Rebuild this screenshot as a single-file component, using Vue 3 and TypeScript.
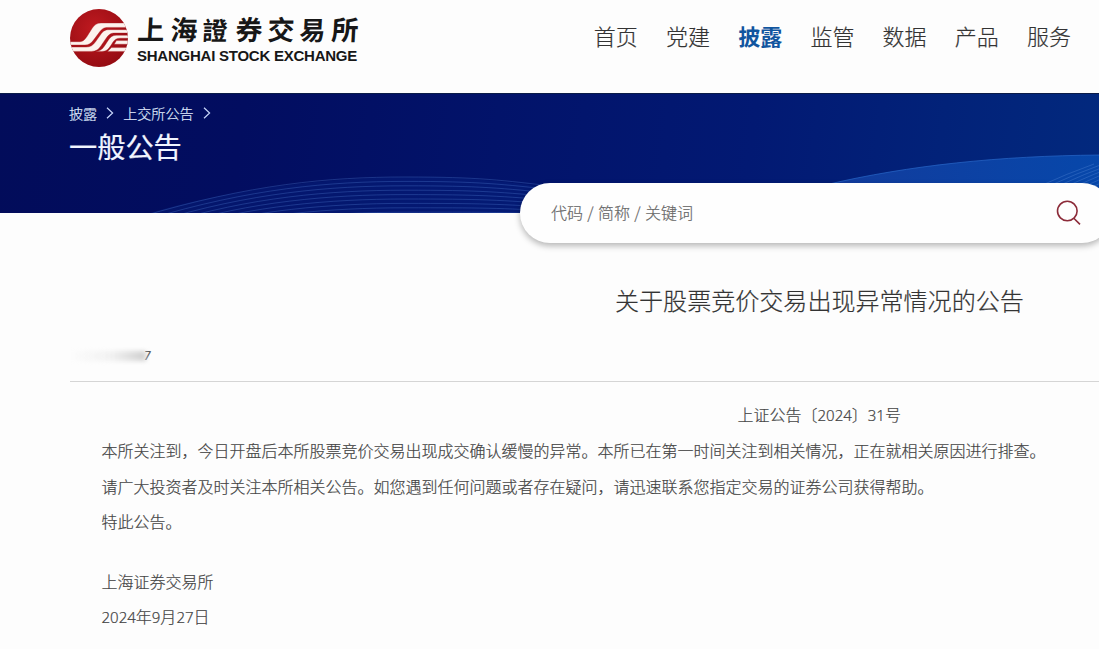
<script setup lang="ts">
interface NavItem { label: string; active?: boolean }
interface Run { text: string; latin?: boolean }
interface Glyph { ch: string; x: number; size: number }

const nav: NavItem[] = [
  { label: '首页' }, { label: '党建' }, { label: '披露', active: true },
  { label: '监管' }, { label: '数据' }, { label: '产品' }, { label: '服务' },
]
const crumbs: string[] = ['披露', '上交所公告']
const paragraphs: string[] = [
  '本所关注到，今日开盘后本所股票竞价交易出现成交确认缓慢的异常。本所已在第一时间关注到相关情况，正在就相关原因进行排查。',
  '请广大投资者及时关注本所相关公告。如您遇到任何问题或者存在疑问，请迅速联系您指定交易的证券公司获得帮助。',
  '特此公告。',
]

// Brush-style wordmark: characters differ slightly in size.
const wordmark: Glyph[] = [
  { ch: '上', x: 1, size: 27 }, { ch: '海', x: 34, size: 27 }, { ch: '證', x: 66, size: 25 },
  { ch: '券', x: 99, size: 27 }, { ch: '交', x: 131, size: 27 }, { ch: '易', x: 163, size: 26 },
  { ch: '所', x: 195, size: 27 },
]

// Digits are set slightly smaller than the surrounding Chinese text.
const runs = (s: string): Run[] =>
  s.split(/(\d+)/).filter(Boolean).map((text) => ({ text, latin: /^\d/.test(text) }))
const docNumber = runs('上证公告〔2024〕31号')
const date = runs('2024年9月27日')

// Upper group of contour lines in the banner.
const contours: string[] = Array.from({ length: 9 }, (_, i) => {
  const y = i * 4.4
  return `M${140 + i * 8} ${124 + y * 0.5} C250 ${91 + y} 330 ${84 + y} 405 ${84 + y} S500 ${87 + y * 0.9} 560 ${94 + y * 0.8}`
})
const rays: string[] = Array.from({ length: 7 }, (_, i) => `M${1040 + i * 9} 93 Q${1066 + i * 9} 81 ${1094 + i * 9} 71`)
</script>

<template>
  <div class="page">
    <header class="header">
      <div class="brand">
        <svg class="mark" viewBox="0 0 60 60">
          <defs>
            <radialGradient id="red" cx="42%" cy="35%" r="65%">
              <stop offset="0" stop-color="#c01a20" />
              <stop offset="1" stop-color="#960c13" />
            </radialGradient>
            <clipPath id="disc"><circle cx="30" cy="30" r="29" /></clipPath>
          </defs>
          <circle cx="30" cy="30" r="29" fill="url(#red)" />
          <g clip-path="url(#disc)" fill="#fdf3ee" stroke="#a31a20" stroke-width=".35">
            <path d="M0 33.7H11C14 33.7 16 31.5 18 28.5L23 20.5C25.5 16.8 28 15 32 15H60V19.4H39C35 19.4 33 20.6 30.5 24.1L24.5 32.1C22 35.6 19.5 37 16 37H0Z" />
            <path d="M0 39.1H17C21.5 39.1 24 37.3 26.5 33.8L31.5 26.8C34 23.1 36 21.7 40 21.7H60V25H46C42 25 40 26.2 37.5 29.7L32 37.7C29.5 41.4 27 43.4 22.5 43.4H0Z" />
            <path d="M26.5 43.4C30.5 43.4 33 41.7 35.5 38L39.3 32.2C41.6 28.7 43.6 27.3 47.3 27.3H60V30.2H51C47.5 30.2 45.8 31.4 44 34.1L42.3 36.8C39.5 41.1 37.5 43.4 33 43.4Z" />
            <path d="M47.5 32.6H60V36.2H45.2ZM42.5 39.6H60V43.4H38.5Z" />
          </g>
        </svg>
        <div class="names">
          <svg class="wordmark" viewBox="0 0 224 36">
            <text
              v-for="g in wordmark" :key="g.ch" class="cn" :font-size="g.size"
              :transform="`translate(${g.x} 32) skewX(-3)`"
            >{{ g.ch }}</text>
          </svg>
          <span class="en">SHANGHAI STOCK EXCHANGE</span>
        </div>
      </div>
      <nav class="nav">
        <a v-for="item in nav" :key="item.label" :class="{ active: item.active }">{{ item.label }}</a>
      </nav>
    </header>

    <section class="banner">
      <svg class="waves" viewBox="0 0 1099 120" preserveAspectRatio="none">
        <defs>
          <linearGradient id="swell" x1="0" x2="1" y1="0" y2="0">
            <stop offset="0" stop-color="#123b9c" />
            <stop offset="1" stop-color="#0747aa" />
          </linearGradient>
        </defs>
        <path d="M150 120C300 76 480 76 580 102V120Z" fill="#0a2b8c" opacity=".3" />
        <path v-for="d in contours" :key="d" :d="d" fill="none" stroke="#4d7ad0" stroke-width=".8" opacity=".42" />
        <path d="M825 92C910 72 1000 63 1099 62V120H825Z" fill="url(#swell)" />
        <path d="M825 92C910 72 1000 63 1099 62" fill="none" stroke="#2866c8" stroke-width="1" opacity=".7" />
        <path v-for="d in rays" :key="d" :d="d" fill="none" stroke="#5d91dc" stroke-width=".8" opacity=".4" />
      </svg>
      <div class="crumbs">
        <template v-for="c in crumbs" :key="c">
          <span>{{ c }}</span>
          <svg class="chevron" viewBox="0 0 8 12"><path d="M1 .8L6.6 6L1 11.2" /></svg>
        </template>
      </div>
      <h1>一般公告</h1>
      <div class="search">
        <span>代码 / 简称 / 关键词</span>
        <svg class="glass" viewBox="0 0 26 26">
          <circle cx="11.3" cy="11" r="9.8" />
          <path d="M17.8 18.2L24 24.4" />
        </svg>
      </div>
    </section>

    <main class="article">
      <h2>关于股票竞价交易出现异常情况的公告</h2>
      <div class="meta"><i class="smudge"></i><span>7</span></div>
      <div class="body">
        <p class="number"><span v-for="(r, i) in docNumber" :key="i" :class="{ latin: r.latin }">{{ r.text }}</span></p>
        <p v-for="p in paragraphs" :key="p">{{ p }}</p>
        <p class="sign">上海证券交易所</p>
        <p><span v-for="(r, i) in date" :key="i" :class="{ latin: r.latin }">{{ r.text }}</span></p>
      </div>
    </main>
  </div>
</template>

<style>
body { margin: 0; background: #fdfdfd; overflow: hidden; }
</style>

<style scoped>
.page {
  width: 1099px; height: 649px; overflow: hidden; background: #fdfdfd; color: #444;
  font-family: "Noto Sans CJK SC", "Noto Sans", sans-serif; font-weight: 300;
  -webkit-text-stroke: .2px currentColor;
}
h1, h2, p { margin: 0; font-weight: inherit; }
.header { height: 93px; display: flex; justify-content: space-between; box-sizing: border-box; padding: 8px 28px 0 69px; }
.brand { display: flex; }
.mark { width: 60px; height: 60px; }
.names { display: flex; flex-direction: column; margin-left: 7px; -webkit-text-stroke: 0; }
.wordmark { width: 224px; height: 36px; overflow: visible; }
.cn { font-family: "Noto Sans CJK TC", sans-serif; font-weight: 700; fill: #171717; }
.en {
  width: 222px; margin: 2px 0 0 1px; font: 700 15px/20px "Liberation Sans", sans-serif; letter-spacing: -.24px;
  white-space: nowrap; color: #171717;
}
.nav { display: flex; gap: 28.2px; font-size: 22px; line-height: 32px; color: #333; padding-top: 11px; }
.nav .active { color: #11559f; font-weight: 700; -webkit-text-stroke: 0; }
.banner {
  position: relative; height: 120px; box-sizing: border-box; padding: 9px 0 0 69px; color: #f1f5ff;
  background: linear-gradient(97deg, #020c5a 0%, #020d60 22%, #02136a 45%, #021973 68%, #022279 85%, #02297e 100%);
  border-top: 1px solid #0b1c48;
}
.waves { position: absolute; inset: -1px 0 0 0; width: 1099px; height: 120px; }
.crumbs { position: relative; display: flex; align-items: center; font-size: 14.1px; line-height: 20px; color: #dfe7fb; }
.chevron { width: 8px; height: 12px; margin: 0 9px; fill: none; stroke: #c8d6fa; stroke-width: 1.2; }
h1 { position: relative; font-size: 28.2px; line-height: 40px; margin-top: 3px; font-weight: 400; }
.search {
  position: absolute; left: 520px; top: 89px; width: 592px; height: 60px; border-radius: 30px; box-sizing: border-box;
  background: #fefefe; box-shadow: 0 3px 6px rgba(0, 0, 0, .28); display: flex; align-items: center;
  justify-content: space-between; padding: 0 30px 0 31px; color: #666; font-size: 16px;
}
.search span { word-spacing: .8px; margin-top: -2px; }
.glass { width: 26px; height: 26px; fill: none; stroke: #8c2b39; stroke-width: 1.6; }
.article { padding-left: 70px; }
h2 { width: 409px; margin: 69px 0 0 545px; font-size: 24.05px; line-height: 36px; white-space: nowrap; color: #333; }
.meta { height: 63px; display: flex; align-items: center; border-bottom: 1px solid #d5d5d5; font: 12px/16px "Noto Sans", sans-serif; color: #555; }
.meta span { font-style: italic; margin: 0 0 -12px -2px; }
.smudge { width: 76px; height: 10px; margin-bottom: -12px; background: linear-gradient(90deg, transparent, #f1f1f1 55%, #d0d0d0); filter: blur(2px); }
.body { padding: 15px 0 0 31.5px; font-size: 16px; line-height: 35.3px; color: #444; white-space: nowrap; }
.number { padding-left: 636px; }
.sign { margin-top: 24.7px; }
.latin { font-family: "Noto Sans", sans-serif; font-size: 15px; }
</style>
